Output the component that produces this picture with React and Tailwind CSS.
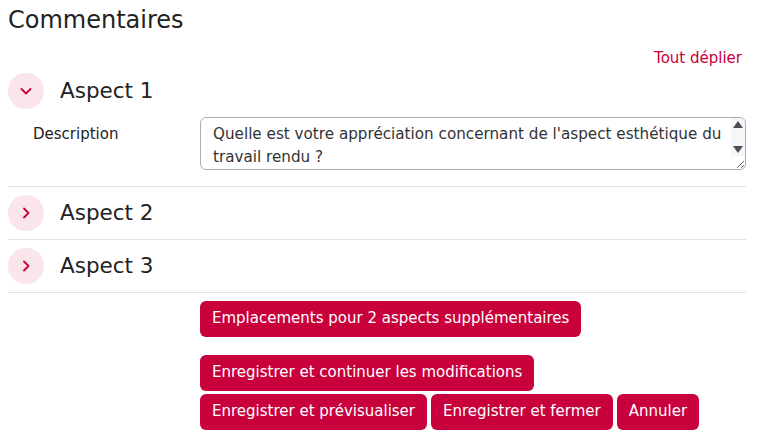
import { useState } from "react";

const FONT = { fontFamily: '"DejaVu Sans", "Noto Sans", sans-serif' };

function Chevron({ open }) {
  return (
    <svg width="14" height="14" viewBox="0 0 14 14" fill="none">
      {open ? (
        <path d="M2.5 5l4.5 4.5 4.5-4.5" stroke="#c8003c" strokeWidth="1.8" strokeLinecap="round" strokeLinejoin="round" />
      ) : (
        <path d="M5 2.5l4.5 4.5-4.5 4.5" stroke="#c8003c" strokeWidth="1.8" strokeLinecap="round" strokeLinejoin="round" />
      )}
    </svg>
  );
}

function AspectHeader({ title, open, onToggle }) {
  return (
    <div className="flex items-center h-[52px]">
      <button
        onClick={onToggle}
        className="w-9 h-9 rounded-full bg-[#f9e5ea] flex items-center justify-center shrink-0"
      >
        <Chevron open={open} />
      </button>
      <h3 className="ml-4 text-[21.5px] text-[#222] leading-none">{title}</h3>
    </div>
  );
}

function Btn({ children }) {
  return (
    <button className="h-9 px-3 rounded-md bg-[#c8003c] text-white text-[15px] whitespace-nowrap">
      {children}
    </button>
  );
}

export default function App() {
  const [open, setOpen] = useState({ 1: true, 2: false, 3: false });

  function toggle(n) {
    setOpen((o) => ({ ...o, [n]: !o[n] }));
  }

  return (
    <div className="bg-white w-[764px] h-[445px] pl-2 pr-[18px] text-[#222]" style={FONT}>
      <h2 className="text-[24px] pt-[5px] leading-[30px]">Commentaires</h2>

      <div className="flex justify-end mt-[12px] pr-1">
        <a className="text-[15px] text-[#c8003c]">Tout déplier</a>
      </div>

      <div className="-mt-[5px]">
        <AspectHeader title="Aspect 1" open={open[1]} onToggle={() => toggle(1)} />
        {open[1] && (
          <div className="grid grid-cols-[192px_1fr] pb-4">
            <label className="pl-[25px] pt-[6px] text-[15px]">Description</label>
            <div className="relative">
              <textarea
                className="block w-full h-[53px] border border-[#a9aeb4] rounded-md pl-3 pr-4 py-[5px] text-[15.2px] leading-[23px] text-[#333] overflow-hidden resize-y"
                style={FONT}
                defaultValue="Quelle est votre appréciation concernant de l'aspect esthétique du travail rendu ?"
              />
              <div className="absolute right-[1px] top-[1px] w-[14px] h-[38px] flex flex-col items-center justify-between py-[3px] bg-[#f5f6f7] rounded-tr-md pointer-events-none">
                <svg width="10" height="7" viewBox="0 0 10 7">
                  <path d="M0 7L5 0l5 7z" fill="#4b4f55" />
                </svg>
                <svg width="10" height="7" viewBox="0 0 10 7">
                  <path d="M0 0h10L5 7z" fill="#4b4f55" />
                </svg>
              </div>
            </div>
          </div>
        )}
      </div>
      <div className="border-t border-[#e2e2e4]">
        <AspectHeader title="Aspect 2" open={open[2]} onToggle={() => toggle(2)} />
      </div>
      <div className="border-t border-[#e2e2e4]">
        <AspectHeader title="Aspect 3" open={open[3]} onToggle={() => toggle(3)} />
      </div>

      <div className="border-t border-[#e2e2e4] pl-[192px] pt-2">
        <Btn>Emplacements pour 2 aspects supplémentaires</Btn>
        <div className="mt-[18px] flex flex-col gap-[3px]">
          <div className="flex">
            <Btn>Enregistrer et continuer les modifications</Btn>
          </div>
          <div className="flex gap-1">
            <Btn>Enregistrer et prévisualiser</Btn>
            <Btn>Enregistrer et fermer</Btn>
            <Btn>Annuler</Btn>
          </div>
        </div>
      </div>
    </div>
  );
}
